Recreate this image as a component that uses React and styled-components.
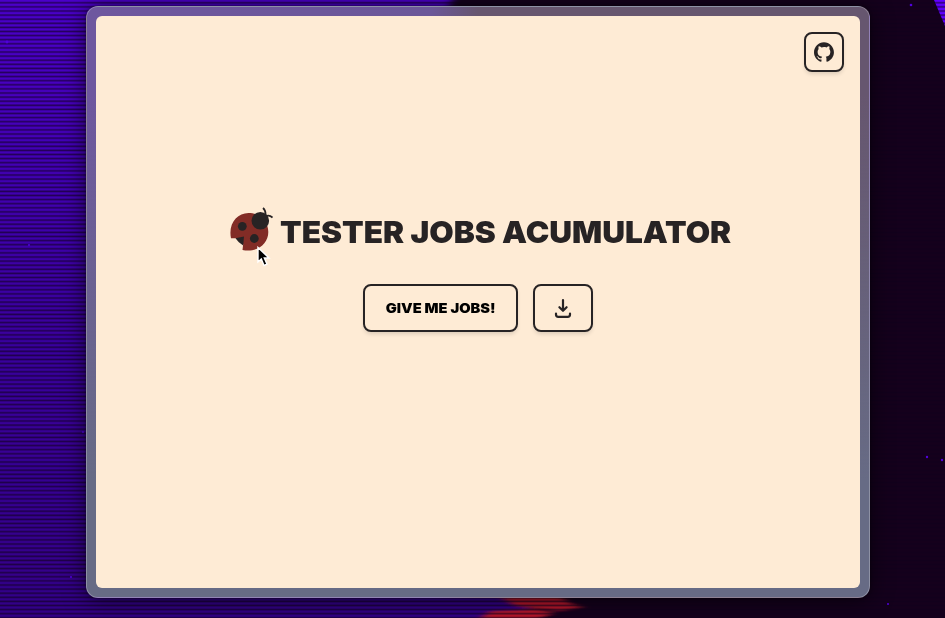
import React from "react";
import styled, { createGlobalStyle } from "styled-components";

const GlobalStyle = createGlobalStyle`
  * { box-sizing: border-box; }
  body { margin: 0; overflow: hidden; background: #0d0014; font-family: Inter, sans-serif; }
`;

const Desktop = styled.main`
  position: relative;
  width: 945px;
  height: 618px;
  overflow: hidden;
  padding: 6px 0 0 86px;
  isolation: isolate;
`;

const Wallpaper = styled.svg`
  position: absolute;
  inset: 0;
  z-index: -1;
`;

const WindowFrame = styled.section`
  width: 784px;
  height: 592px;
  padding: 9px;
  border: 1px solid #ffffff42;
  border-radius: 12px;
  background:
    linear-gradient(180deg, #676c8500 15%, #676b85 80%),
    linear-gradient(90deg, #6e579f 0%, #6b5799 44%, #67566f 50%, #66566f 100%);
  box-shadow: 0 2px 22px #000000a0, 0 0 3px #00000080;
`;

const Page = styled.div`
  display: flex;
  flex-direction: column;
  height: 100%;
  border-radius: 6px;
  background: #feebd5;
  color: #272324;
`;

const Toolbar = styled.header`
  display: flex;
  justify-content: flex-end;
  padding: 16px 16px 0 0;
`;

const Button = styled.button`
  display: flex;
  align-items: center;
  justify-content: center;
  width: ${({ $width }) => $width}px;
  height: ${({ $height }) => $height}px;
  padding: 0;
  border: 2px solid #272324;
  border-radius: 8px;
  background: #feebd5;
  color: #272324;
  font-family: inherit;
  box-shadow: 0 3px 4px -1px #00000024;
`;

const Hero = styled.div`
  display: flex;
  flex-direction: column;
  align-items: center;
  padding-top: 130px;
`;

const Brand = styled.div`
  display: flex;
  align-items: center;
  gap: 7px;
  width: 498px;
  height: 50px;
`;

const Title = styled.h1`
  width: 447px;
  margin: 9px 0 0;
  font-size: 30.5px;
  line-height: 40px;
  font-weight: 900;
  white-space: nowrap;
  transform: scaleX(1.035);
  transform-origin: left;
`;

const Actions = styled.div`
  display: flex;
  gap: 15px;
  margin-top: 32px;
`;

const Label = styled.span`
  color: #000;
  font-size: 13.5px;
  font-weight: 900;
  white-space: nowrap;
  transform: scaleX(1.085);
`;

const Pointer = styled.svg`
  position: absolute;
  left: 256px;
  top: 246px;
`;

function Background() {
  return (
    <Wallpaper width="945" height="618" viewBox="0 0 945 618" aria-hidden="true">
      <defs>
        <linearGradient id="violet" x2="0" y2="1">
          <stop stopColor="#4c00cd" />
          <stop offset=".5" stopColor="#3a00a0" />
          <stop offset="1" stopColor="#320085" />
        </linearGradient>
        <pattern id="lines" width="10" height="4.1" patternUnits="userSpaceOnUse">
          <rect y="2" width="10" height="1.6" fill="#10001c" opacity=".62" />
        </pattern>
        <filter id="soft"><feGaussianBlur stdDeviation="4 1" /></filter>
        <filter id="edge"><feGaussianBlur stdDeviation="5 1" /></filter>
      </defs>
      <rect width="945" height="618" fill="#15001c" />
      <path d="M-20 -20H462L448 8L430 300L540 600L500 640H-20Z" fill="url(#violet)" filter="url(#edge)" />
      <path d="M934 0H945V26Z" fill="#6000ff" />
      <path d="M500 597L560 597L572 604L584 607L560 611L515 606ZM490 611L535 609L555 613L535 620H478Z" fill="#b5182c" filter="url(#soft)" />
      <rect width="945" height="618" fill="url(#lines)" />
      <g fill="#5100dc">
        <circle cx="7" cy="42" r="1.4" /><circle cx="911" cy="5" r="1.3" />
        <circle cx="29" cy="245" r="1" /><circle cx="83" cy="432" r="1" />
        <circle cx="927" cy="457" r="1.2" /><circle cx="942" cy="460" r="1.2" />
        <circle cx="71" cy="577" r="1" /><circle cx="888" cy="604" r="1" />
      </g>
    </Wallpaper>
  );
}

function Ladybug() {
  return (
    <svg width="44" height="50" viewBox="0 0 44 50" aria-hidden="true">
      <path d="M2 36.3C-1 22 8 11 19.5 11C31 11 39.3 19.5 39.3 30C39.3 42 28 51 13.5 48L14.2 42L7 36.3Z" fill="#822c26" />
      <path d="M6.5 36.3L15 34.5L14.2 43.5Q9.5 41 6.5 36.3Z" fill="#272324" />
      <g fill="#272324">
        <circle cx="31.3" cy="18.8" r="8.8" />
        <circle cx="13.3" cy="24.3" r="4.4" /><circle cx="25.3" cy="36.5" r="4.4" />
      </g>
      <path d="M34 6Q37 8.5 36.5 13.5M36.5 14.5Q40 12.5 43.5 15.5" fill="none" stroke="#272324" strokeWidth="1.7" />
    </svg>
  );
}

function GithubMark() {
  return (
    <svg width="20" height="20" viewBox="0 0 98 96" fill="currentColor" aria-hidden="true">
      <path d="M48.854 0C21.839 0 0 22 0 49.217c0 21.756 13.993 40.172 33.405 46.69 2.427.49 3.316-1.059 3.316-2.362 0-1.141-.08-5.052-.08-9.127-13.59 2.934-16.42-5.867-16.42-5.867-2.184-5.704-5.42-7.17-5.42-7.17-4.448-3.015.324-3.015.324-3.015 4.934.326 7.523 5.052 7.523 5.052 4.367 7.496 11.404 5.378 14.235 4.074.404-3.178 1.699-5.378 3.074-6.6-10.839-1.141-22.243-5.378-22.243-24.283 0-5.378 1.94-9.778 5.014-13.2-.485-1.222-2.184-6.275.486-13.038 0 0 4.125-1.304 13.426 5.052a46.97 46.97 0 0 1 12.214-1.63c4.125 0 8.33.571 12.213 1.63 9.302-6.356 13.427-5.052 13.427-5.052 2.67 6.763.97 11.816.485 13.038 3.155 3.422 5.015 7.822 5.015 13.2 0 18.905-11.404 23.06-22.324 24.283 1.78 1.548 3.316 4.481 3.316 9.126 0 6.6-.08 11.897-.08 13.526 0 1.304.89 2.853 3.316 2.364 19.412-6.52 33.405-24.935 33.405-46.691C97.707 22 75.788 0 48.854 0Z" />
    </svg>
  );
}

function DownloadIcon() {
  return (
    <svg width="18" height="20" viewBox="0 0 18 20" fill="none" stroke="currentColor" strokeWidth="2.2" strokeLinecap="round" strokeLinejoin="round" aria-hidden="true">
      <path d="M9 2V12.5M5.4 9.2L9 12.8L12.6 9.2M2 15.5V16.5Q2 18.8 4.3 18.8H13.7Q16 18.8 16 16.5V15.5" />
    </svg>
  );
}

export default function App() {
  return (
    <Desktop>
      <GlobalStyle />
      <Background />
      <WindowFrame>
        <Page>
          <Toolbar>
            <Button $width={40} $height={40} aria-label="GitHub"><GithubMark /></Button>
          </Toolbar>
          <Hero>
            <Brand><Ladybug /><Title>TESTER JOBS ACUMULATOR</Title></Brand>
            <Actions>
              <Button $width={155} $height={48}><Label>GIVE ME JOBS!</Label></Button>
              <Button $width={60} $height={48} aria-label="Download"><DownloadIcon /></Button>
            </Actions>
          </Hero>
        </Page>
      </WindowFrame>
      <Pointer width="16" height="22" viewBox="0 0 16 22" aria-hidden="true">
        <path d="M2 1.5V16L5.3 13L8 19.5L11 18.2L8.3 12H13Z" fill="#000" stroke="#fff" strokeWidth="1.4" />
      </Pointer>
    </Desktop>
  );
}
